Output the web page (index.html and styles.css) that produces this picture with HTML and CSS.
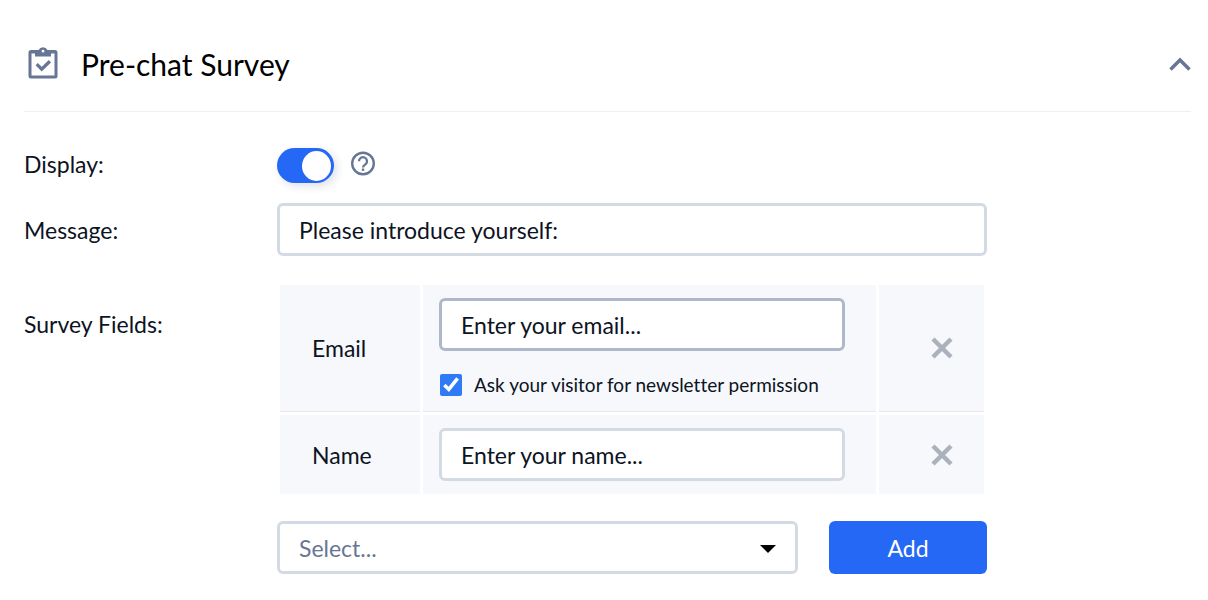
FILE: index.html
```
<!DOCTYPE html>
<html lang="en">
<head>
	<meta charset="UTF-8">
	<meta name="viewport" content="width=device-width, initial-scale=1">
	<title>Pre-chat Survey</title>
	<link rel="stylesheet" href="styles.css">
</head>
<body>
	<section class="panel">
		<header class="panel-header">
			<svg class="panel-icon" width="30" height="32" viewBox="0 0 30 32" aria-hidden="true">
				<path fill="#677694" fill-rule="evenodd" d="M3 3h7.500a5 5 0 0 1 9 0H27a2.500 2.500 0 0 1 2.500 2.500v23.500a2.500 2.500 0 0 1-2.500 2.500H3A2.500 2.500 0 0 1 .5 29V5.500A2.500 2.500 0 0 1 3 3zm4 3.500H3.500V28.500h23V6.500H23v3H7zM15 2.800a1.400 1.400 0 1 0 0 2.800 1.400 1.400 0 0 0 0-2.800z"/>
				<path fill="none" stroke="#677694" stroke-width="3.300" d="M8.700 17.200l5 5 8.200-8"/>
			</svg>
			<h1>Pre-chat Survey</h1>
			<button class="collapse" type="button" aria-label="Collapse">
				<svg width="22" height="14" viewBox="0 0 22 14"><path fill="none" stroke="#677694" stroke-width="3.500" d="M1.500 12.500l9.500-9.500 9.500 9.500"/></svg>
			</button>
		</header>

		<form class="form">
			<label class="form-label display-label" for="display">Display:</label>
			<div class="display-row">
				<input id="display" class="toggle" type="checkbox" role="switch" checked>
				<svg class="help" width="26" height="26" viewBox="0 0 26 26" role="img" aria-label="Help">
					<circle cx="13" cy="12.500" r="10.800" fill="none" stroke="#677694" stroke-width="2.400"/>
					<path fill="none" stroke="#677694" stroke-width="2.300" d="M9 10.300a4 4 0 1 1 6.700 2.800C14 14.500 13 14.800 13 16.500"/>
					<rect x="11.800" y="17.500" width="2.400" height="2.400" fill="#677694"/>
				</svg>
			</div>

			<label class="form-label" for="message">Message:</label>
			<input id="message" class="text-input" type="text" value="Please introduce yourself:">

			<div class="form-label fields-label" id="fieldsLabel">Survey Fields:</div>
			<div class="fields">
				<table class="fields-table" aria-labelledby="fieldsLabel">
					<tr>
						<th class="col-name" scope="row"><label for="email">Email</label></th>
						<td class="col-input">
							<input id="email" class="text-input active" type="text" value="Enter your email...">
							<div class="permission">
								<input id="newsletter" type="checkbox" checked>
								<label for="newsletter">Ask your visitor for newsletter permission</label>
							</div>
						</td>
						<td class="col-remove">
							<button class="remove" type="button" aria-label="Remove email">
								<svg width="22" height="22" viewBox="0 0 22 22"><path stroke="#abb2bb" stroke-width="4.500" d="M2 2l18 18M20 2L2 20"/></svg>
							</button>
						</td>
					</tr>
					<tr>
						<th class="col-name" scope="row"><label for="name">Name</label></th>
						<td class="col-input">
							<input id="name" class="text-input" type="text" value="Enter your name...">
						</td>
						<td class="col-remove">
							<button class="remove" type="button" aria-label="Remove name">
								<svg width="22" height="22" viewBox="0 0 22 22"><path stroke="#abb2bb" stroke-width="4.500" d="M2 2l18 18M20 2L2 20"/></svg>
							</button>
						</td>
					</tr>
				</table>

				<div class="add-row">
					<div class="select-wrap">
						<select class="text-input" aria-label="Field to add">
							<option>Select...</option>
						</select>
						<svg class="arrow" width="16" height="8" viewBox="0 0 16 8" aria-hidden="true"><path d="M0 0h16L8 8z"/></svg>
					</div>
					<button class="add" type="button">Add</button>
				</div>
			</div>
		</form>
	</section>
</body>
</html>
```
FILE: styles.css
```
* { box-sizing: border-box; }

body {
	margin: 0;
	background: #fff;
	color: #0d131f;
	font: 23px/28px Lato, "Liberation Sans", sans-serif;
	font-variant-ligatures: none;
}

input, select, button { font: inherit; color: inherit; }

.panel { padding: 16px 17px 26px 24px; }

.panel-header {
	display: flex;
	align-items: center;
	height: 96px;
	padding-left: 4px;
	border-bottom: 1px solid #eff0f2;
}
.panel-icon { margin-bottom: 2px; }
.panel-header h1 {
	flex: 1;
	margin: 0 0 0 23px;
	color: #000;
	font-size: 30px;
	font-weight: 400;
	line-height: 36px;
}

.collapse, .remove {
	display: flex;
	padding: 0;
	border: 0;
	background: none;
	cursor: pointer;
}

.form {
	display: grid;
	grid-template-columns: 253px minmax(0, 710px);
	padding-top: 36px;
	row-gap: 20px;
}
.form-label { align-self: center; }
.display-label { padding-bottom: 4px; }
.fields-label { align-self: start; padding-top: 34px; }

.display-row {
	display: flex;
	align-items: center;
	gap: 16px;
}

.toggle {
	appearance: none;
	display: flex;
	justify-content: flex-end;
	align-items: center;
	width: 57px;
	height: 35px;
	margin: 0;
	padding: 0 3px;
	border-radius: 18px;
	background: #2668f6;
	box-shadow: 3px 3px 8px rgba(30, 50, 90, 0.15);
}
.toggle::before {
	content: "";
	width: 29px;
	height: 30px;
	border-radius: 50%;
	background: #fff;
}
.help { margin-bottom: 4px; }

.text-input {
	display: block;
	width: 100%;
	height: 53px;
	padding: 0 19px;
	border: 3px solid #d4dae4;
	border-radius: 6px;
	background: #fff;
}
.text-input.active { border-color: #afb8ca; }

.fields { padding-top: 6px; }

.fields-table {
	width: 100%;
	border-spacing: 3px;
}
.fields-table th, .fields-table td {
	padding: 13px 0;
	background: #f6f8fc;
}
.fields-table tr:first-child > * { border-bottom: 1px solid #e6e8ec; }
.fields-table .col-name {
	width: 140px;
	padding-left: 32px;
	font-weight: 400;
	text-align: left;
}
.fields-table .col-input { padding: 13px 31px 13px 16px; }
.fields-table .col-remove { width: 105px; }
.remove { margin: 0 0 0 52px; }

.permission {
	display: flex;
	align-items: center;
	gap: 12px;
	margin-top: 21px;
	font-size: 19px;
	line-height: 26px;
}
.permission input {
	width: 22px;
	height: 22px;
	margin: 0 0 0 1px;
	accent-color: #2f7bf6;
}

.add-row {
	display: flex;
	gap: 31px;
	margin-top: 24px;
}
.select-wrap { position: relative; flex: 1; }
.select-wrap select { appearance: none; color: #677694; }
.arrow {
	position: absolute;
	top: 24px;
	right: 22px;
	pointer-events: none;
}

.add {
	width: 158px;
	height: 53px;
	border: 0;
	border-radius: 6px;
	background: #2668f6;
	color: #fff;
	cursor: pointer;
}
```
